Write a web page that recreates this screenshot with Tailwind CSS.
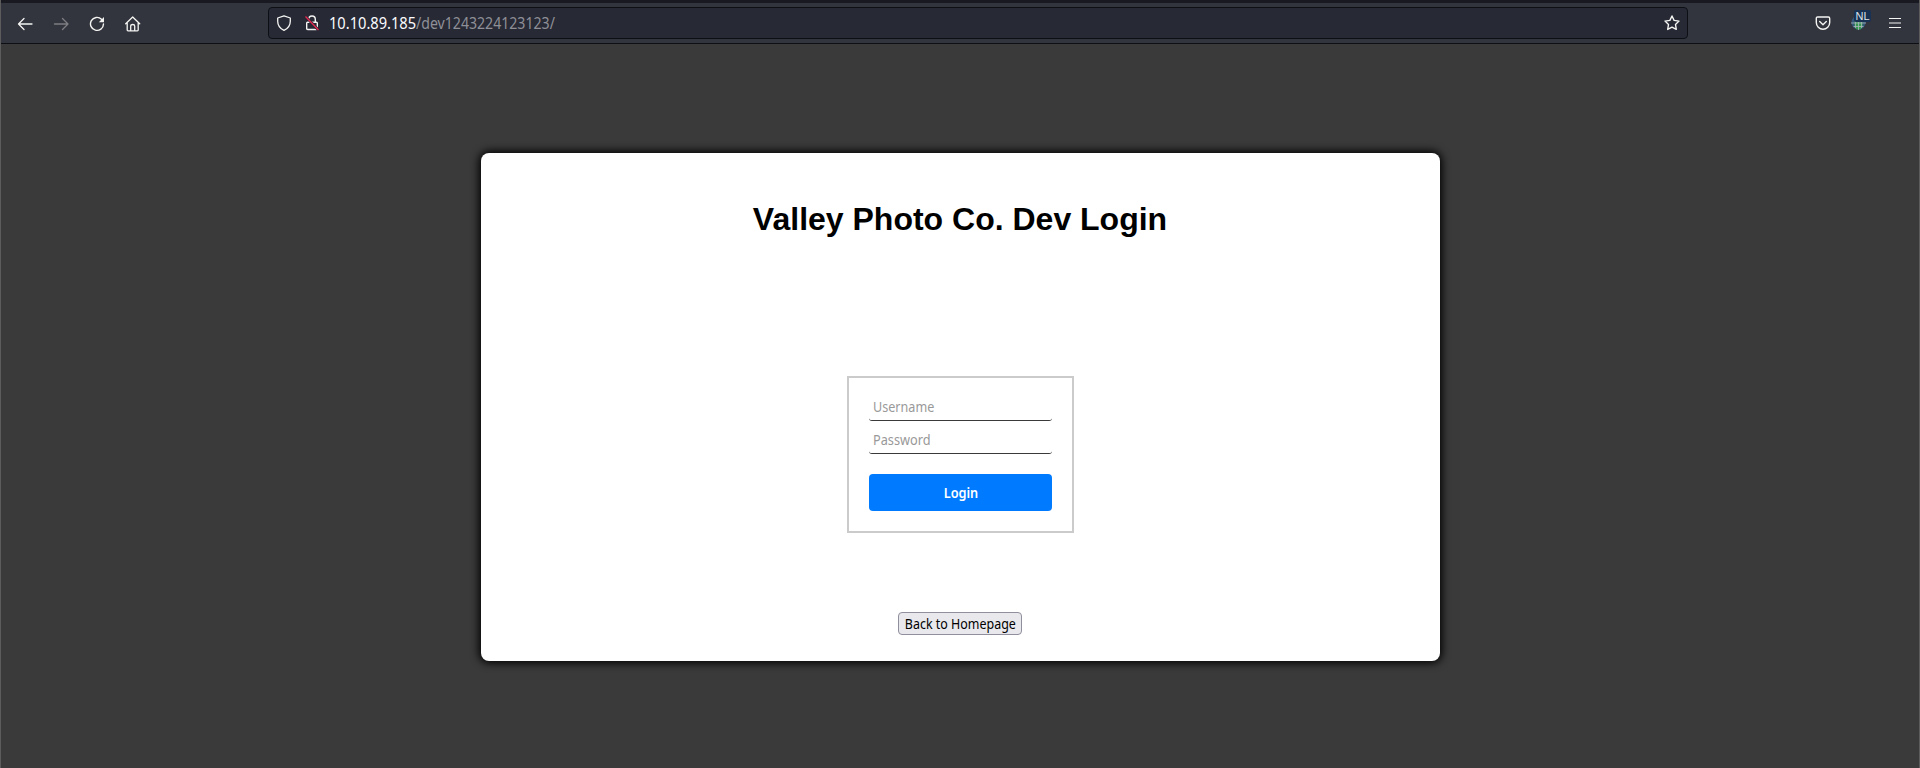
<!DOCTYPE html>
<html lang="en">
<head>
<meta charset="utf-8">
<title>Valley Photo Co. Dev Login</title>
<script src="https://cdn.jsdelivr.net/npm/@tailwindcss/browser@4"></script>
</head>
<body class="h-[768px] w-[1920px] overflow-hidden flex flex-col bg-[#3a3a3a] border-x border-[#5c5c5c] font-['Noto_Sans',sans-serif]">
<header class="h-11 shrink-0 box-border border-t-3 border-t-[#191a21] border-b border-b-[#0e0f14] bg-[#33353e] flex items-center text-[#f4f4f2]">
  <nav class="flex w-[267px] pl-4 pt-0.5 gap-5">
    <svg class="size-4" viewBox="0 0 16 16" fill="none" stroke="currentColor" stroke-width="1.3" stroke-linecap="round" stroke-linejoin="round"><path d="M15 8H1.5M7 2.5 1.5 8 7 13.500"/></svg>
    <svg class="size-4 text-[#7d7e82]" viewBox="0 0 16 16" fill="none" stroke="currentColor" stroke-width="1.3" stroke-linecap="round" stroke-linejoin="round"><path d="M1.500 8H15M9.500 2.500 15 8 9.500 13.500"/></svg>
    <svg class="size-4" viewBox="0 0 16 16" fill="none" stroke="currentColor" stroke-width="1.4" stroke-linecap="round"><path d="M12.500 3.200A6.500 6.500 0 1 0 14.500 8"/><path d="M15 1v5.200H9.800z" fill="currentColor" stroke="none"/></svg>
    <svg class="size-4" viewBox="0 0 16 16" fill="none" stroke="currentColor" stroke-width="1.3" stroke-linecap="round" stroke-linejoin="round"><path d="M.7 7.700 7.700 1l7 6.700M2.200 6.500V14q0 .8.8.8h9.400q.8 0 .8-.8V6.500M5.700 14.500V10q0-1.500 2-1.500t2 1.500v4.500"/></svg>
  </nav>
  <div class="w-[1420px] h-8 rounded border border-[#0e0f15] bg-[#272935] flex items-center pl-[7px] pr-[7px]">
    <svg class="size-4" viewBox="0 0 16 16" fill="none" stroke="currentColor" stroke-width="1.3" stroke-linejoin="round"><path d="M8 .8 14.300 3v3.200c0 4-2.200 7.200-6.300 9.200-4.100-2-6.300-5.200-6.300-9.200V3z"/></svg>
    <svg class="size-4 ml-3" viewBox="0 0 16 16" fill="none" stroke="currentColor" stroke-width="1.4" stroke-linejoin="round"><path d="M4.700 7V4.300a3.300 3.300 0 0 1 6.600 0V7M3.600 7.200h8.800q.9 0 .9.900v5.300q0 1.100-1.100 1.100H3.800q-1.100 0-1.100-1.100V8.100q0-.9.900-.9z"/><path d="M1.500 1.500 14.500 15" stroke="#272935" stroke-width="2.800"/><path d="M1.500 1.500 14.500 15" stroke="#e22850" stroke-width="1.400"/></svg>
    <div class="ml-[9px] flex text-[15.5px] leading-5 text-[#8f9097] whitespace-nowrap"><span class="text-[#fbfbfe] origin-left scale-x-[0.944] -mr-[5px]">10.10.89.185</span><span class="origin-left scale-x-[0.91]">/dev1243224123123/</span></div>
    <svg class="size-4 ml-auto" viewBox="0 0 16 16" fill="none" stroke="currentColor" stroke-width="1.4" stroke-linejoin="round"><path d="m8 1 2.100 4.400 4.900.7-3.500 3.400.8 4.900L8 12.100l-4.300 2.300.8-4.900L1 6.100l4.900-.7z"/></svg>
  </div>
  <div class="flex items-center ml-auto pr-[18px]">
    <svg class="size-4" viewBox="0 0 16 16" fill="none" stroke="currentColor" stroke-width="1.4" stroke-linecap="round" stroke-linejoin="round"><path d="M2.700 2h10.600q1.400 0 1.400 1.400V7.500a6.700 6.700 0 0 1-13.400 0V3.400Q1.300 2 2.700 2zM4.700 6.500 8 9.700l3.300-3.200"/></svg>
    <div class="relative ml-5 w-5 h-5">
      <svg class="size-5" viewBox="0 0 20 20" fill="none"><circle cx="7.500" cy="9.500" r="7" fill="#34587b"/><path d="M3.500 8h8v6l-2 2.500h-4l-2-2.500z" fill="#379950"/><path d="M0 10h15M2.500 13.500h10M4.500 8v7M7.500 8v9M10.500 8v7" stroke="#a9b8bd" stroke-width=".8"/></svg>
      <span class="absolute left-[3px] -top-[3px] w-[17px] h-3 rounded-xs bg-[#193153] text-[#dde3ea] text-[11px] leading-3 text-center font-['Liberation_Sans',sans-serif]">NL</span>
    </div>
    <svg class="w-3 h-4 ml-[18px]" viewBox="0 0 12 16" stroke="currentColor" stroke-width="1.200"><path d="M0 3.500h12M0 8h12M0 12.500h12"/></svg>
  </div>
</header>
<main class="flex flex-col items-center pt-[109px]">
  <section class="ml-px w-[959px] pr-px h-[508px] rounded-lg bg-white shadow-[0_0_8px_2px_black] flex flex-col items-center pt-[47px] text-black">
    <h1 class="text-[32px] leading-[38px] font-bold font-['Liberation_Sans',Arial,sans-serif]">Valley Photo Co. Dev Login</h1>
    <form class="mt-[138px] ml-px w-[227px] h-[157px] border-2 border-[#cbcbcb] p-5 flex flex-col">
      <div class="h-[23px] rounded-[3px] border-b border-[#3a3a3a] px-1">
        <input class="block w-full h-[18px] text-[14px] leading-[18px] origin-left scale-x-[0.9] placeholder:text-[#999999] placeholder:opacity-100 outline-none" placeholder="Username" aria-label="Username">
      </div>
      <div class="mt-[10px] h-[23px] rounded-[3px] border-b border-[#3a3a3a] px-1">
        <input type="password" class="block w-full h-[18px] text-[14px] leading-[18px] origin-left scale-x-[0.91] placeholder:text-[#999999] placeholder:opacity-100 outline-none" placeholder="Password" aria-label="Password">
      </div>
      <button type="button" class="mt-5 h-[37px] rounded bg-[#007bff] text-white text-[14px] leading-[18px] font-semibold"><span class="inline-block pt-px scale-x-[0.91]">Login</span></button>
    </form>
    <button type="button" class="mt-[79px] w-[124px] h-[23px] rounded border border-[#8f8f9d] bg-[#e9e9ed] flex items-center justify-center text-[14px] leading-[18px] whitespace-nowrap"><span class="inline-block scale-x-[0.89]">Back to Homepage</span></button>
  </section>
</main>
</body>
</html>
